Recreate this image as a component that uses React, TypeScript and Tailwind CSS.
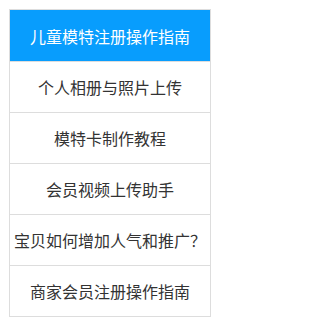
export default function App() {
  const items = [
    "个人相册与照片上传",
    "模特卡制作教程",
    "会员视频上传助手",
    "宝贝如何增加人气和推广？",
    "商家会员注册操作指南",
  ];
  return (
    <div className="w-[220px] h-[325px] bg-white pt-[9px] pl-[9px]" style={{ fontFamily: '"Noto Sans CJK SC", "Noto Sans", sans-serif' }}>
      <ul className="w-[202px] border border-[#dddddd] flex flex-col">
        <li className="h-[51px] bg-[#089dfd] text-white text-[16px] flex items-center justify-center">
          儿童模特注册操作指南
        </li>
        {items.map((t) => (
          <li key={t} className="h-[51px] border-t border-[#dddddd] text-[#333333] text-[16px] flex items-center justify-center whitespace-nowrap">
            {t}
          </li>
        ))}
      </ul>
    </div>
  );
}
